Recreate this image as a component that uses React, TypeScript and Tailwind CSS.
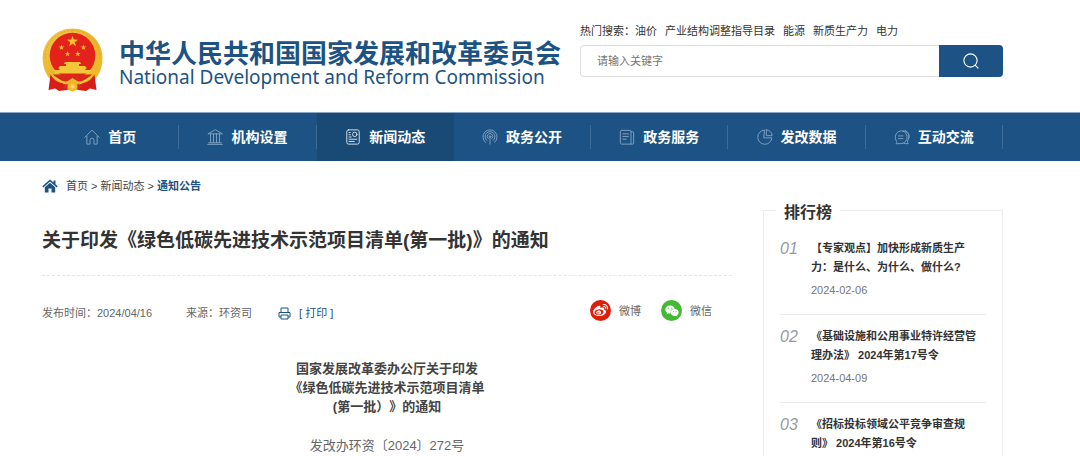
import type { ReactNode } from "react";
import { FaWeibo, FaWeixin } from "react-icons/fa";

function Star({ x, y, r }: { x: number; y: number; r: number }) {
  const points = Array.from({ length: 10 }, (_, i) => {
    const radius = i % 2 === 0 ? r : r * 0.4;
    const angle = (Math.PI / 5) * i - Math.PI / 2;
    return `${x + radius * Math.cos(angle)},${y + radius * Math.sin(angle)}`;
  }).join(" ");
  return <polygon points={points} fill="#f6c32c" />;
}

function Emblem() {
  return (
    <svg viewBox="0 0 61 64" className="h-16 w-[61px] shrink-0" role="img" aria-label="国徽">
      <defs>
        <linearGradient id="gold" x1="0" y1="0" x2="1" y2="1">
          <stop offset="0" stopColor="#f3cb4b" />
          <stop offset="0.5" stopColor="#eab42c" />
          <stop offset="1" stopColor="#f2bd27" />
        </linearGradient>
      </defs>
      <path d="M30.5 .5C14 .5 .6 13.500 .6 30c0 10 4 19 11 24.500l19 4 19-4c7-5.500 10.900-14.500 10.900-24.500C60.500 13.500 47 .5 30.500 .5Z" fill="url(#gold)" />
      <path d="M30.500 2.500C15 2.500 3 14.500 3 30M30.500 2.500C46 2.500 58 14.500 58 30" fill="none" stroke="#dca531" strokeWidth="1" strokeDasharray="2 1.500" />
      <circle cx="30.500" cy="27.500" r="22.800" fill="#e3231b" />
      <Star x={30.500} y={13.500} r={5.800} />
      <Star x={19.500} y={19.500} r={2.900} />
      <Star x={41.500} y={19.500} r={2.900} />
      <Star x={25.500} y={26} r={2.900} />
      <Star x={35.800} y={26} r={2.900} />
      <path d="M23 34h15l1.200 2H37v2h6l2 2.500h-1.500V42H49l-1 3.500H13L12 42h5.500v-1.500H16L18 38h6v-2h-2.200Z" fill="#f4c73a" />
      <path d="M11 46.500h39c-3 4-7 6.500-11 7.500H22c-4-1-8-3.500-11-7.500Z" fill="#d9291c" />
      <path d="M8 46c5 1 8 5 13 7 4 1.500 6-1 9.500-3 3.500 2 5.500 4.500 9.500 3 5-2 8-6 13-7l-3 11-12 5H23l-12-5Z" fill="#efb829" />
      <path d="M8.500 46.500 6.500 62l6.500-1.500 4 2.500 8-1-1-7C17 56 12 52 8.500 46.500ZM52.500 46.500 54.500 62l-6.500-1.500-4 2.500-8-1 1-7C44 56 49 52 52.500 46.500Z" fill="#d81e18" />
      <path d="M20 55c4 2 17 2 21 0l-2 5c-4 2-13 2-17 0Z" fill="#dc2a1b" />
      <circle cx="30.500" cy="58.500" r="5" fill="#efb829" />
      <circle cx="30.500" cy="58.500" r="2.200" fill="#f8d65a" />
      <path d="M13 50c4 1 6 5 11 6M48 50c-4 1-6 5-11 6" fill="none" stroke="#f8d65a" strokeWidth="1" />
    </svg>
  );
}

function LineIcon({ children, active }: { children: ReactNode; active?: boolean }) {
  return (
    <svg
      viewBox="0 0 18 18"
      className={active ? "size-4 shrink-0 text-[#d3dfea]" : "size-4 shrink-0 text-[#7f9fbe]"}
      fill="none"
      stroke="currentColor"
      strokeWidth="1.1"
      strokeLinecap="round"
      strokeLinejoin="round"
      aria-hidden="true"
    >
      {children}
    </svg>
  );
}

const navItems: { label: string; active?: boolean; icon: ReactNode }[] = [
  { label: "首页", icon: <path d="M.8 9.500 9 1.200l8.200 8.300M3.200 8v9h3.600v-4.500a2.200 2.200 0 0 1 4.400 0V17h3.600V8" /> },
  { label: "机构设置", icon: <path d="M9 1 1 5.500h16ZM4 5.500v10M7.300 5.500v10M10.700 5.500v10M14 5.500v10M2 15.500h14M.8 17.300h16.400" /> },
  {
    label: "新闻动态",
    active: true,
    icon: (
      <>
        <rect x="2" y="1" width="14" height="16" rx="2" />
        <circle cx="11" cy="6" r="2.500" />
        <path d="M4.500 4H6M4.500 6.500H6M4.500 9H7M4.500 11.500h9M4.500 14h6" />
      </>
    ),
  },
  {
    label: "政务公开",
    icon: (
      <>
        <path d="M3.800 15A8 8 0 1 1 14.200 15M5.300 12.800a5.600 5.600 0 1 1 7.400 0M6.900 10.800a3.200 3.200 0 1 1 4.200 0M9 8.500V17" />
        <circle cx="9" cy="8.500" r="1" />
      </>
    ),
  },
  { label: "政务服务", icon: <path d="M3 1.500h9A1.500 1.500 0 0 1 13.500 3v14H3A1.500 1.500 0 0 1 1.500 15.500V3A1.500 1.500 0 0 1 3 1.500ZM13.500 3h1.700A1.300 1.300 0 0 1 16.500 4.300v11.400A1.300 1.300 0 0 1 15.200 17h-1.700M4.300 5.500h6.200M4.300 8.500h6.200M4.300 11.500H8" /> },
  { label: "发改数据", icon: <path d="M8 1.200A8 8 0 1 0 16.800 10H8ZM10.500 1v6.500H17A6.500 6.500 0 0 0 10.500 1Z" /> },
  {
    label: "互动交流",
    icon: <path d="M3.500 16.500H2.300c.8-.8 1-1.500.6-2.600A6.700 7.200 0 1 1 7.500 16.500ZM10 2c5.500.3 7.300 4.500 6.600 8-.3 1.700-1 2.800-1.600 3.600 0 1.200.3 2 1 2.900-1.800.2-3.500 0-5-.6M12.500 1.800c4 1.200 5 5 4.300 8.200M5 7.800h5M5 10.800h5" />,
  },
];

const ranking = [
  { no: "01", title: "【专家观点】加快形成新质生产力：是什么、为什么、做什么?", date: "2024-02-06" },
  { no: "02", title: "《基础设施和公用事业特许经营管理办法》 2024年第17号令", date: "2024-04-09" },
  { no: "03", title: "《招标投标领域公平竞争审查规则》 2024年第16号令" },
];

const hotWords = ["油价", "产业结构调整指导目录", "能源", "新质生产力", "电力"];

function Header() {
  return (
    <header className="flex items-start justify-between pt-[22px] pr-[77px] pb-5 pl-[42px]">
      <a href="#" className="flex gap-4 pt-1.5 text-[#1c5384]">
        <Emblem />
        <span className="flex flex-col gap-px pt-[13px] whitespace-nowrap">
          <span className="text-[26px] leading-[26px] font-bold">中华人民共和国国家发展和改革委员会</span>
          <span className="font-['Noto_Sans'] text-[19px] leading-[19px]">National Development and Reform Commission</span>
        </span>
      </a>
      <form className="w-[423px] shrink-0" onSubmit={(e) => e.preventDefault()}>
        <div className="flex gap-2 text-[11px] leading-[18px] text-[#333]">
          <span>
            热门搜索：<a href="#">{hotWords[0]}</a>
          </span>
          {hotWords.slice(1).map((word) => (
            <a href="#" key={word}>{word}</a>
          ))}
        </div>
        <div className="mt-[5px] flex h-8">
          <input
            type="text"
            aria-label="请输入关键字"
            placeholder="请输入关键字"
            className="min-w-0 flex-1 rounded-l border border-r-0 border-[#dedede] px-4 text-[11px] outline-none placeholder:text-[#757575]"
          />
          <button type="submit" aria-label="搜索" className="flex w-16 items-center justify-center rounded-r bg-[#1c5384] text-white">
            <svg viewBox="0 0 16 16" className="size-4" fill="none" stroke="currentColor" strokeWidth="1.1" strokeLinecap="round">
              <circle cx="7.500" cy="7.500" r="6.600" />
              <path d="m12.300 12.300 2.700 2.700" />
            </svg>
          </button>
        </div>
      </form>
    </header>
  );
}

function Nav() {
  return (
    <nav className="border-t border-[#8ba7c1] bg-[#1c5384] pr-[77px] pl-[42px]">
      <ul className="grid grid-cols-7">
        {navItems.map((item) => (
          <li key={item.label} className={item.active ? "flex items-center bg-[#194a76]" : "flex items-center"}>
            <a href="#" className="flex h-12 flex-1 items-center justify-center gap-2 text-[14px] font-bold whitespace-nowrap text-white">
              <LineIcon active={item.active}>{item.icon}</LineIcon>
              {item.label}
            </a>
            {!item.active && <span className="h-6 w-px bg-[#3e6c98]" />}
          </li>
        ))}
      </ul>
    </nav>
  );
}

function Article() {
  return (
    <article className="min-w-0 flex-1">
      <div className="flex items-center gap-2 text-[11px] leading-4 text-[#444]">
        <svg viewBox="0 0 16 14" className="h-3.5 w-4" fill="#1c5384" aria-hidden="true">
          <path d="M8 .5.3 7.300l1 1.100L8 2.600l6.700 5.800 1-1.100-2.200-2V1.500h-2v2Z" />
          <path d="M8 3.800 2.800 8.300V13.500h3.700V9.500h3v4h3.700V8.300Z" />
        </svg>
        <span>
          <a href="#">首页</a> &gt; <a href="#">新闻动态</a> &gt; <a href="#" className="font-bold text-[#1c5384]">通知公告</a>
        </span>
      </div>
      <h1 className="mt-[33px] border-b border-dashed border-[#e6e6e6] pb-5 text-[19px] leading-7 font-bold text-[#333]">
        关于印发《绿色低碳先进技术示范项目清单(第一批)》的通知
      </h1>
      <div className="mt-6 flex items-center pr-5 text-[11px] text-[#666]">
        <div className="flex flex-1 items-center pt-[5px]">
          <span className="mr-[34px]">发布时间：2024/04/16</span>
          <span className="mr-[26px]">来源：环资司</span>
          <button type="button" className="flex items-center gap-2 text-[#1c5384]">
            <svg viewBox="0 0 13 13" className="size-[13px]" fill="none" stroke="currentColor" strokeWidth="1" aria-hidden="true">
              <path d="M3 5.500V1h7v4.500M3 10H1V5.500h11V10h-2M3 8h7v4H3Z" />
            </svg>
            [ 打印 ]
          </button>
        </div>
        <a href="#" className="flex items-center gap-2">
          <span className="flex size-[21px] items-center justify-center rounded-full bg-[#dc1e0a] text-white"><FaWeibo size={15} /></span>
          微博
        </a>
        <a href="#" className="ml-5 flex items-center gap-2">
          <span className="flex size-[21px] items-center justify-center rounded-full bg-[#44b934] text-white"><FaWeixin size={14} /></span>
          微信
        </a>
      </div>
      <div className="mt-[37px] text-center text-[13px] leading-[19px] text-[#444]">
        <p className="font-bold">
          国家发展改革委办公厅关于印发
          <br />
          《绿色低碳先进技术示范项目清单
          <br />
          (第一批）》的通知
        </p>
        <p className="mt-5 text-[#666]">发改办环资〔2024〕272号</p>
      </div>
    </article>
  );
}

function Ranking() {
  return (
    <aside className="mt-8 w-60 shrink-0 border border-b-0 border-[#ececec] px-4">
      <h2 className="-mt-2.5 -ml-1 w-fit bg-white px-2 text-[16px] leading-6 font-bold text-[#333]">排行榜</h2>
      <ol className="divide-y divide-[#ebebeb] pt-0.5">
        {ranking.map((item) => (
          <li key={item.no} className="flex pt-3 pb-3.5 text-[11px] last:pb-0">
            <span className="w-[31px] shrink-0 text-[16px] leading-[19px] text-[#999] italic">{item.no}</span>
            <div className="pr-2">
              <a href="#" className="block leading-[19px] font-bold text-[#333]">{item.title}</a>
              {item.date && <time className="mt-1 block leading-[19px] text-[#777]">{item.date}</time>}
            </div>
          </li>
        ))}
      </ol>
    </aside>
  );
}

export default function App() {
  return (
    <div lang="zh-CN" className="flex min-h-screen flex-col bg-white font-['Liberation_Sans','Noto_Sans_CJK_SC',sans-serif] [text-spacing-trim:space-all]">
      <Header />
      <Nav />
      <main className="flex flex-1 gap-[31px] pt-[17px] pr-[77px] pl-[42px]">
        <Article />
        <Ranking />
      </main>
    </div>
  );
}
